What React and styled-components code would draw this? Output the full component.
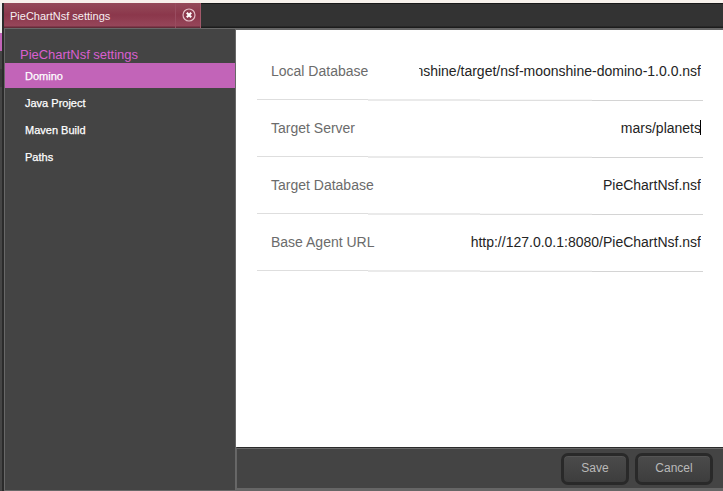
import React from "react";
import styled, { createGlobalStyle } from "styled-components";

const GlobalStyle = createGlobalStyle`
  * { box-sizing: border-box; }
  body {
    margin: 0;
    overflow: hidden;
    font-family: "Liberation Sans", Arial, Helvetica, sans-serif;
  }
`;

const Window = styled.div`
  width: 723px;
  height: 491px;
  padding-top: 3px;
  background: #f7f1ec;
  display: flex;
  overflow: hidden;
`;

const Gutter = styled.div`
  width: 4px;
  flex: none;
  border-right: 2px solid #2b2b2b;
  background: linear-gradient(#f0efee 0 30px, #c264b8 30px 48px, #454545 48px 66px, #3a3a3a 66px 84px, #454545 84px);
`;

const Main = styled.div`
  flex: 1;
  min-width: 0;
  display: flex;
  flex-direction: column;
`;

const TabBar = styled.div`
  height: 25px;
  flex: none;
  display: flex;
  background: linear-gradient(#191919 0 1px, #333 1px 23px, #1c1c1c 24px);
`;

const Tab = styled.div`
  width: 197px;
  display: flex;
  color: #f6eff1;
  font-size: 11px;
  line-height: 26px;
  background: linear-gradient(#944a5a, #8b374b 12px, #96465a 23px, #642b39 24px);
  border-right: 1px solid #a2596a;
`;

const TabTitle = styled.span`
  width: 172px;
  padding-left: 6px;
  border-right: 1px solid #994c60;
`;

const CloseButton = styled.button`
  width: 24px;
  padding: 0 0 1px 1px;
  border: 0;
  background: none;
  display: flex;
  align-items: center;
  justify-content: center;
`;

const Body = styled.div`
  flex: 1;
  display: flex;
  min-height: 0;
`;

const Sidebar = styled.nav`
  width: 232px;
  flex: none;
  background: #444;
  border: 1px solid #686868;
  padding-top: 18px;
`;

const SidebarTitle = styled.h1`
  height: 16px;
  margin: 0;
  padding-left: 15px;
  color: #d95fd0;
  font-size: 13px;
  font-weight: 400;
  line-height: 16px;
  letter-spacing: -0.03px;
`;

const SidebarItem = styled.div`
  height: ${(p) => (p.$active ? 25 : 27)}px;
  padding-left: 20px;
  color: #fff;
  background: ${(p) => (p.$active ? "#c264b8" : "transparent")};
  margin-bottom: ${(p) => (p.$active ? 2 : 0)}px;
  font-size: 11px;
  line-height: 26px;
  -webkit-text-stroke: 0.25px #fff;
`;

const Content = styled.section`
  flex: 1;
  min-width: 0;
  display: flex;
  flex-direction: column;
  border-top: 2px solid #666;
`;

const Form = styled.div`
  flex: 1;
  padding: 13px 20px 0 21px;
  background: #fff;
`;

const Rule = styled.div`
  height: 2px;
  margin-bottom: -1px;
  background:
    linear-gradient(90deg, #dedede 0 111px, #eaeaea 111px 223px, #f7f7f7 223px 335px, #fff 335px) 0 0 / 100% 1px no-repeat,
    linear-gradient(90deg, #fff 0 111px, #eaeaea 111px 223px, #dfdfdf 223px 335px, #d4d4d4 335px) 0 1px / 100% 1px no-repeat;
`;

const Row = styled.div`
  height: 56px;
  display: flex;
  justify-content: space-between;
  align-items: center;
  padding: 0 2px 1px 14px;
  font-size: 14px;
`;

const Label = styled.label`
  color: #6b6b6b;
`;

const Value = styled.div`
  max-width: 282px;
  display: flex;
  justify-content: flex-end;
  overflow: hidden;
  white-space: nowrap;
  color: #242424;
`;

const Caret = styled.span`
  width: 1px;
  height: 15px;
  margin-left: -1px;
  background: #000;
`;

const Footer = styled.footer`
  height: 44px;
  flex: none;
  display: flex;
  gap: 6px;
  justify-content: flex-end;
  padding: 4px 10px 0 0;
  background: #444;
  border-top: 1px solid #2b2b2b;
  border-bottom: 3px solid #666;
  border-left: 1px solid #666;
  box-shadow: inset 0 1px #696969;
`;

const Button = styled.button`
  width: ${(p) => p.$width}px;
  height: 32px;
  padding: 0 0 2px;
  margin-top: 1px;
  border: 3px solid #292929;
  border-radius: 7px;
  background: linear-gradient(#4b4b4b, #3d3d3d);
  box-shadow: inset 0 1px #555;
  color: #b9b9b9;
  font: 12px/24px "Liberation Sans", Arial, sans-serif;
`;

const pages = [
  { name: "Domino", active: true },
  { name: "Java Project" },
  { name: "Maven Build" },
  { name: "Paths" },
];

const settings = [
  { label: "Local Database", value: "moonshine/target/nsf-moonshine-domino-1.0.0.nsf" },
  { label: "Target Server", value: "mars/planets", focused: true },
  { label: "Target Database", value: "PieChartNsf.nsf" },
  { label: "Base Agent URL", value: "http://127.0.0.1:8080/PieChartNsf.nsf" },
];

const CloseIcon = () => (
  <svg width="14" height="14" viewBox="0 0 14 14" fill="none">
    <circle cx="7" cy="7" r="6" stroke="#e3bfc8" strokeWidth="1.2" />
    <path d="M4.8 4.8l4.4 4.4M9.2 4.8L4.8 9.2" stroke="#fff" strokeWidth="2.1" />
  </svg>
);

export default function App() {
  return (
    <>
      <GlobalStyle />
      <Window>
        <Gutter />
        <Main>
          <TabBar>
            <Tab>
              <TabTitle>PieChartNsf settings</TabTitle>
              <CloseButton aria-label="Close"><CloseIcon /></CloseButton>
            </Tab>
          </TabBar>
          <Body>
            <Sidebar>
              <SidebarTitle>PieChartNsf settings</SidebarTitle>
              {pages.map((p) => (
                <SidebarItem key={p.name} $active={p.active}>{p.name}</SidebarItem>
              ))}
            </Sidebar>
            <Content>
              <Form>
                {settings.map((s) => (
                  <React.Fragment key={s.label}>
                    <Row>
                      <Label>{s.label}</Label>
                      <Value>
                        {s.value}
                        {s.focused && <Caret />}
                      </Value>
                    </Row>
                    <Rule />
                  </React.Fragment>
                ))}
              </Form>
              <Footer>
                <Button $width={68}>Save</Button>
                <Button $width={78}>Cancel</Button>
              </Footer>
            </Content>
          </Body>
        </Main>
      </Window>
    </>
  );
}
